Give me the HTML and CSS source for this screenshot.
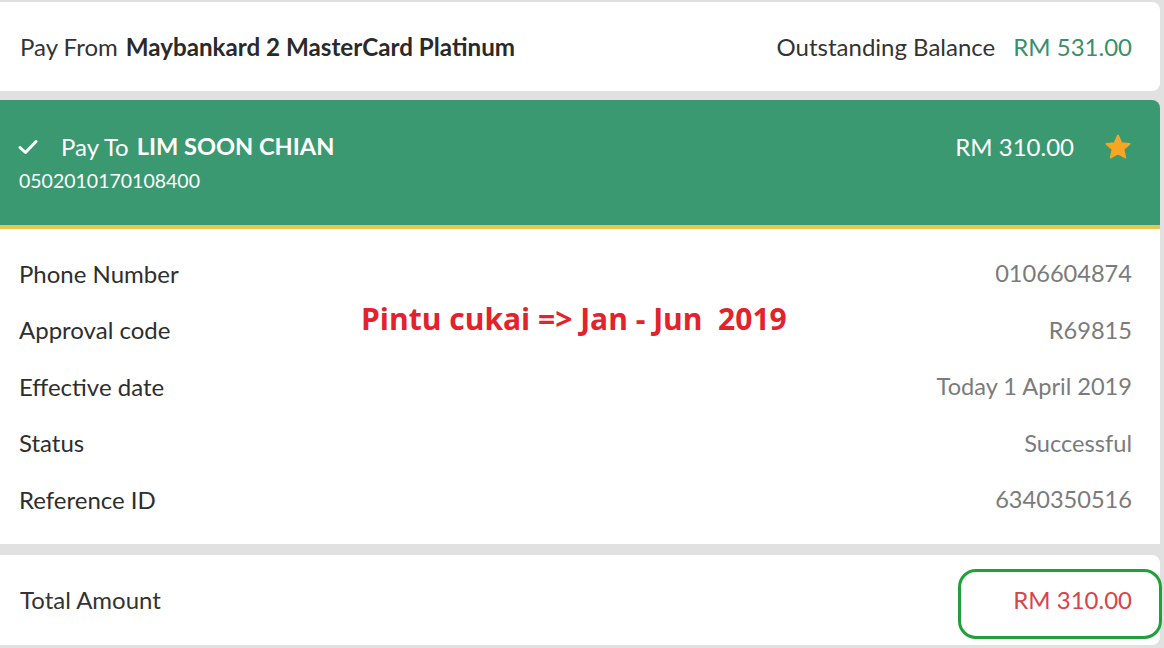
FILE: index.html
```html
<!DOCTYPE html>
<html>
<head>
<meta charset="utf-8">
<link rel="stylesheet" href="styles.css">
</head>
<body>
<div class="page">
  <section class="card from">
    <div class="from-left"><span class="muted-label">Pay From</span><span class="strong">Maybankard 2 MasterCard Platinum</span></div>
    <div class="from-right"><span class="muted-label">Outstanding Balance</span><span class="green-amt">RM 531.00</span></div>
  </section>

  <section class="payee">
    <div class="payee-main">
      <div class="payee-line">
        <svg class="check" width="20" height="16" viewBox="0 0 20 16"><path d="M2 8.5 L7.5 13.5 L18 2.5" fill="none" stroke="#fff" stroke-width="3" stroke-linecap="round" stroke-linejoin="round"/></svg>
        <span class="payto">Pay To</span><span class="payee-name">LIM SOON CHIAN</span>
      </div>
      <div class="acct">0502010170108400</div>
    </div>
    <div class="payee-right">
      <span class="payee-amt">RM 310.00</span>
      <svg class="star" width="28" height="27" viewBox="0 0 24 23"><path d="M12 1.2 L14.9 7.7 L22 8.4 L16.7 13.1 L18.2 20.1 L12 16.5 L5.8 20.1 L7.3 13.1 L2 8.4 L9.1 7.7 Z" fill="#f5a623" stroke="#f5a623" stroke-width="1.6" stroke-linejoin="round"/></svg>
    </div>
  </section>

  <section class="details">
    <div class="row"><span>Phone Number</span><span class="val">0106604874</span></div>
    <div class="row"><span>Approval code</span><span class="val">R69815</span></div>
    <div class="row"><span>Effective date</span><span class="val">Today 1 April 2019</span></div>
    <div class="row"><span>Status</span><span class="val">Successful</span></div>
    <div class="row"><span>Reference ID</span><span class="val">6340350516</span></div>
    <div class="note">Pintu cukai =&gt; Jan - Jun&nbsp; 2019</div>
  </section>

  <section class="card total">
    <span class="muted-label">Total Amount</span>
    <span class="red-amt">RM 310.00</span>
    <div class="circle"></div>
  </section>
</div>
</body>
</html>
```

FILE: styles.css
```css
html, body {
  margin: 0;
  padding: 0;
  background: #e1e1e1;
  font-family: Lato, "Open Sans", sans-serif;
  color: #2e2e2e;
}
.page {
  width: 1160px;
  padding-top: 2px;
  display: flex;
  flex-direction: column;
  font-size: 24px;
}
.card {
  background: #fff;
  border-radius: 0 8px 8px 0;
  display: flex;
  align-items: center;
  justify-content: space-between;
  padding: 0 28px 0 20px;
}
.from {
  height: 89px;
}
.from-left, .from-right {
  display: flex;
  align-items: baseline;
}
.muted-label {
  color: #333;
}
.strong {
  font-weight: 700;
  font-size: 24.2px;
  margin-left: 8px;
  color: #2a2a2a;
}
.green-amt {
  color: #3a8f6a;
  margin-left: 18px;
}
.payee {
  margin-top: 9px;
  background: #3a9970;
  border-radius: 0 8px 0 0;
  border-bottom: 4px solid #eac44e;
  height: 125px;
  display: flex;
  justify-content: space-between;
  align-items: flex-start;
  padding: 0 28px 0 18px;
  color: #fff;
}
.payee-main {
  padding-top: 32px;
}
.payee-line {
  display: flex;
  align-items: center;
  height: 28px;
}
.check {
  margin-right: 23px;
  margin-top: 2px;
}
.payto {
  font-size: 24px;
}
.payee-name {
  font-weight: 700;
  font-size: 23.6px;
  margin-left: 8px;
}
.acct {
  font-size: 19.5px;
  margin-top: 9px;
  margin-left: 1px;
}
.payee-right {
  display: flex;
  align-items: center;
  padding-top: 32px;
  height: 28px;
}
.payee-amt {
  font-size: 24px;
}
.star {
  margin-left: 30px;
  margin-top: 2px;
}
.details {
  position: relative;
  background: #fff;
  padding: 16px 28px 16px 19px;
  display: flex;
  flex-direction: column;
}
.row {
  height: 56.5px;
  display: flex;
  align-items: center;
  justify-content: space-between;
  color: #2e2e2e;
}
.val {
  color: #7b7b7b;
  font-size: 23.6px;
}
.note {
  position: absolute;
  left: 361px;
  top: 69px;
  font-family: "Open Sans", Lato, sans-serif;
  font-weight: 700;
  font-size: 30px;
  letter-spacing: 0px;
  color: #e3222b;
  white-space: nowrap;
}
.total {
  position: relative;
  margin-top: 11px;
  height: 90px;
  border-radius: 0 8px 8px 0;
}
.red-amt {
  color: #d9434a;
}
.circle {
  position: absolute;
  left: 958px;
  top: 14px;
  width: 198px;
  height: 64px;
  border: 3px solid #1fa03a;
  border-radius: 18px;
}
```
